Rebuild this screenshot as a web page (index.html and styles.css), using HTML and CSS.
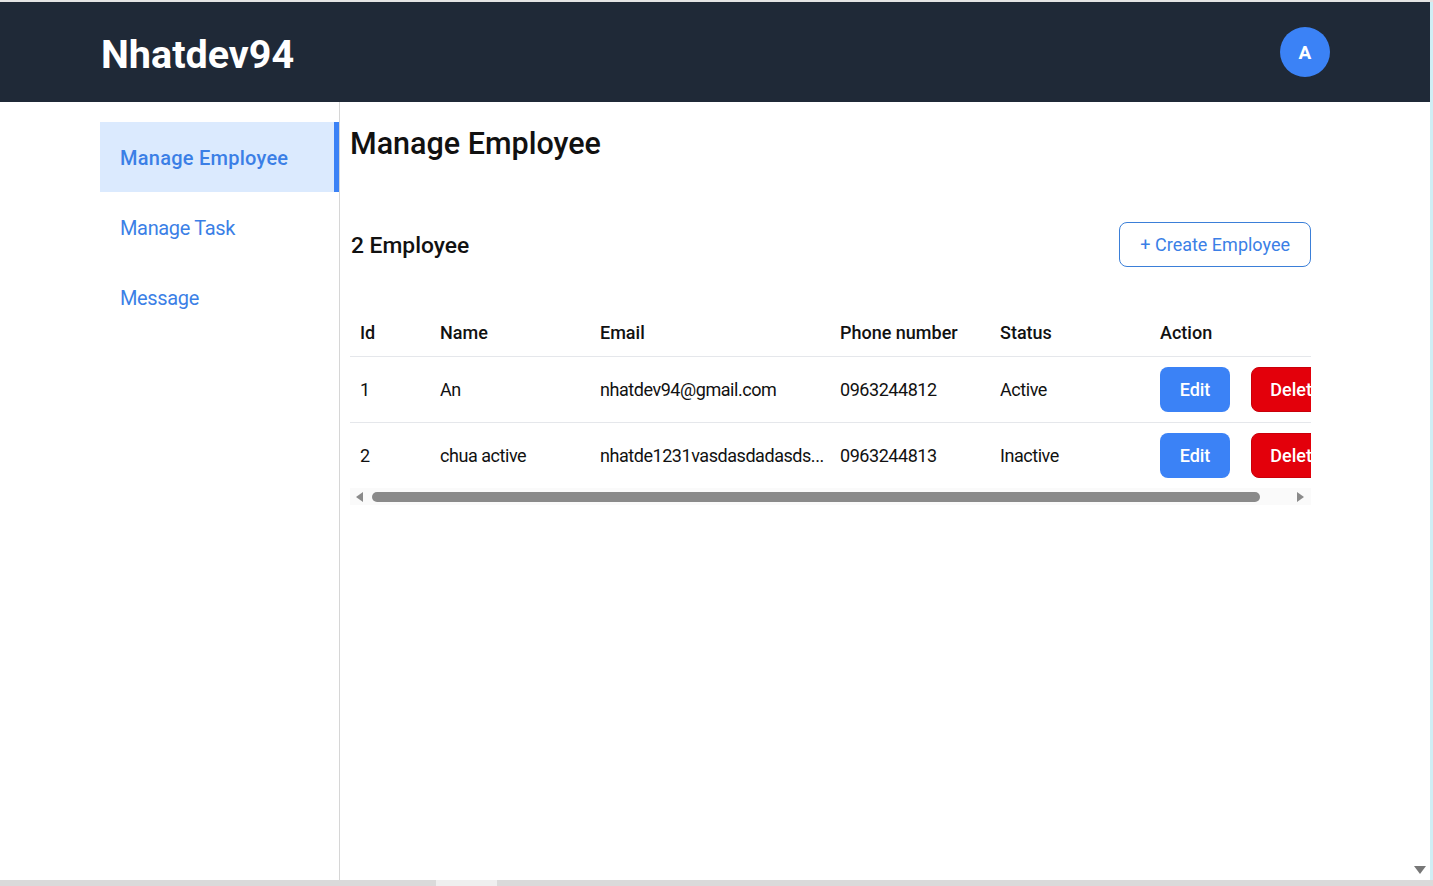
FILE: index.html
```html
<!DOCTYPE html>
<html lang="en">
<head>
<meta charset="utf-8">
<title>Manage Employee</title>
<link rel="stylesheet" href="styles.css">
</head>
<body>
<div class="screen">
  <div class="frame">
    <div class="page">
      <header class="topbar">
        <div class="logo">Nhatdev94</div>
        <div class="avatar">A</div>
      </header>
      <div class="body">
        <aside class="sidebar">
          <nav class="nav">
            <a class="nav-item active">Manage Employee</a>
            <a class="nav-item">Manage Task</a>
            <a class="nav-item">Message</a>
          </nav>
        </aside>
        <main class="main">
          <div class="content">
            <h1 class="title">Manage Employee</h1>
            <div class="toolbar">
              <div class="count">2 Employee</div>
              <button class="btn-create">+ Create Employee</button>
            </div>
            <div class="table-wrap">
              <div class="table-scroll">
                <table class="table">
                  <colgroup>
                    <col class="c-id"><col class="c-name"><col class="c-email"><col class="c-phone"><col class="c-status"><col class="c-action">
                  </colgroup>
                  <thead>
                    <tr><th>Id</th><th>Name</th><th>Email</th><th>Phone number</th><th>Status</th><th>Action</th></tr>
                  </thead>
                  <tbody>
                    <tr>
                      <td>1</td><td>An</td><td>nhatdev94@gmail.com</td><td>0963244812</td><td>Active</td>
                      <td class="actions"><button class="btn btn-edit">Edit</button><button class="btn btn-delete">Delete</button></td>
                    </tr>
                    <tr>
                      <td>2</td><td>chua active</td><td>nhatde1231vasdasdadasds...</td><td>0963244813</td><td>Inactive</td>
                      <td class="actions"><button class="btn btn-edit">Edit</button><button class="btn btn-delete">Delete</button></td>
                    </tr>
                  </tbody>
                </table>
              </div>
              <div class="hbar">
                <span class="arrow-left"></span>
                <div class="hbar-track"><div class="hbar-thumb"></div></div>
                <span class="arrow-right"></span>
              </div>
            </div>
          </div>
        </main>
      </div>
      <span class="scroll-down"></span>
    </div>
    <div class="vscroll"></div>
  </div>
  <div class="hscroll"><div class="hscroll-thumb"></div></div>
</div>
</body>
</html>
```

FILE: styles.css
```css
html, body {
  margin: 0;
  padding: 0;
}
body {
  height: 886px;
  overflow: hidden;
  border-top: 2px solid #e4e4e4;
  box-sizing: border-box;
  font-family: Roboto, "Noto Sans", sans-serif;
  color: #111;
  background: #fff;
}
.screen {
  display: flex;
  flex-direction: column;
  height: 884px;
}
.frame {
  display: flex;
  flex: 1;
  min-height: 0;
}
.page {
  width: 1430px;
  display: flex;
  flex-direction: column;
  position: relative;
}
.vscroll {
  width: 3px;
  background: #cfeef5;
}
.hscroll {
  height: 6px;
  background: #dadada;
  display: flex;
}
.hscroll-thumb {
  margin-left: 436px;
  width: 61px;
  background: #efefef;
}
.scroll-down {
  position: absolute;
  right: 4px;
  bottom: 6px;
  width: 0;
  height: 0;
  border-left: 6px solid transparent;
  border-right: 6px solid transparent;
  border-top: 8px solid #777;
}

/* header */
.topbar {
  height: 100px;
  background: #1f2937;
  display: flex;
  align-items: center;
  justify-content: space-between;
  padding: 0 100px;
  flex-shrink: 0;
}
.logo {
  color: #fff;
  font-size: 39.5px;
  font-weight: 700;
  line-height: 1;
  margin-top: 6px;
  padding-left: 1px;
}
.avatar {
  width: 50px;
  height: 50px;
  border-radius: 50%;
  background: #3b82f6;
  color: #fff;
  font-weight: 700;
  font-size: 19px;
  display: flex;
  align-items: center;
  justify-content: center;
}

/* body */
.body {
  flex: 1;
  display: flex;
  min-height: 0;
}
.sidebar {
  width: 340px;
  box-sizing: border-box;
  border-right: 1px solid #d6d6d6;
  padding: 20px 0 0 100px;
  flex-shrink: 0;
}
.nav {
  display: flex;
  flex-direction: column;
}
.nav-item {
  height: 70px;
  display: flex;
  align-items: center;
  padding-left: 20px;
  padding-top: 2px;
  box-sizing: border-box;
  color: #3b7fe6;
  font-size: 20px;
  letter-spacing: -0.35px;
  cursor: pointer;
}
.nav-item.active {
  background: #dbeafe;
  border-right: 5px solid #3b82f6;
  font-weight: 500;
  letter-spacing: 0.25px;
}

.main {
  flex: 1;
  padding: 24px 0 0 10px;
}
.content {
  width: 961px;
}
.title {
  margin: 0;
  font-size: 30.5px;
  line-height: 36px;
  font-weight: 500;
  color: #111;
}
.toolbar {
  margin-top: 60px;
  display: flex;
  align-items: center;
  justify-content: space-between;
}
.count {
  font-size: 22.8px;
  font-weight: 500;
  padding-left: 1px;
  padding-top: 1px;
}
.btn-create {
  height: 45px;
  padding: 0 20px;
  border: 1px solid #3b7fd8;
  border-radius: 8px;
  background: #fff;
  color: #3b7fe6;
  font-family: inherit;
  font-size: 18px;
}

.table-wrap {
  margin-top: 43px;
}
.table-scroll {
  overflow: hidden;
}
.table {
  border-collapse: collapse;
  table-layout: fixed;
  width: 1010px;
  font-size: 18px;
}
.c-id { width: 80px; }
.c-name { width: 160px; }
.c-email { width: 240px; }
.c-phone { width: 160px; }
.c-status { width: 160px; }
.c-action { width: 210px; }
.table th {
  text-align: left;
  font-weight: 500;
  height: 44px;
  padding: 0 10px 2px;
  border-bottom: 1px solid #e5e7eb;
}
.table td {
  height: 65px;
  padding: 0 10px;
  border-bottom: 1px solid #e5e7eb;
  white-space: nowrap;
  overflow: hidden;
  letter-spacing: -0.45px;
}
.table tbody tr:last-child td {
  border-bottom: none;
}
.btn {
  height: 45px;
  border: none;
  border-radius: 8px;
  color: #fff;
  font-family: inherit;
  font-size: 18px;
  font-weight: 500;
  letter-spacing: 0;
  padding: 0 18px;
  vertical-align: middle;
}
.btn-edit {
  background: #3b82f6;
  width: 70px;
  margin-right: 21px;
}
.btn-delete {
  background: #e3000b;
  border: 1px solid #c9000a;
  width: 90px;
}

.hbar {
  height: 17px;
  display: flex;
  align-items: center;
  background: #fafafa;
}
.arrow-left {
  margin-left: 6px;
  width: 0;
  height: 0;
  border-top: 5px solid transparent;
  border-bottom: 5px solid transparent;
  border-right: 7px solid #8a8a8a;
}
.hbar-track {
  flex: 1;
  padding: 0 37px 0 9px;
}
.hbar-thumb {
  height: 10px;
  border-radius: 5px;
  background: #8a8a8a;
}
.arrow-right {
  margin-right: 7px;
  width: 0;
  height: 0;
  border-top: 5px solid transparent;
  border-bottom: 5px solid transparent;
  border-left: 7px solid #8a8a8a;
}
```
